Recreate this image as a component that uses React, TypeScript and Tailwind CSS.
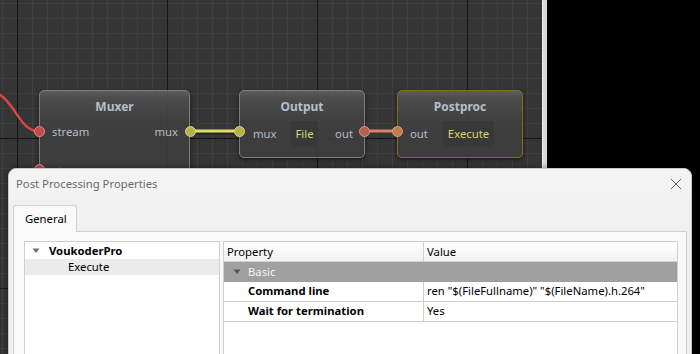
import React from "react";

const ui = { fontFamily: '"Noto Sans", "Open Sans", sans-serif' };

function Grid() {
  const minorV: number[] = [];
  for (let x = 2; x < 542; x += 15) minorV.push(x);
  const minorH: number[] = [];
  for (let y = 3; y < 354; y += 15) minorH.push(y);
  return (
    <svg width={542} height={354} className="absolute left-0 top-0">
      <rect x={0} y={0} width={542} height={354} fill="#353535" />
      {minorV.map((x) => (
        <line key={"v" + x} x1={x + 0.5} y1={0} x2={x + 0.5} y2={354} stroke="#3f3f3f" strokeWidth={1} />
      ))}
      {minorH.map((y) => (
        <line key={"h" + y} x1={0} y1={y + 0.5} x2={542} y2={y + 0.5} stroke="#3f3f3f" strokeWidth={1} />
      ))}
      {[17, 167, 317, 467].map((x) => (
        <line key={"V" + x} x1={x + 0.5} y1={0} x2={x + 0.5} y2={354} stroke="#151515" strokeWidth={1} />
      ))}
      {[138, 288].map((y) => (
        <line key={"H" + y} x1={0} y1={y + 0.5} x2={542} y2={y + 0.5} stroke="#151515" strokeWidth={1} />
      ))}
      <path d="M -15 88 C 17 95, 16 131, 39 131" fill="none" stroke="#d84444" strokeWidth={2.5} />
      <line x1={190} y1={133.5} x2={239} y2={133.5} stroke="#222" strokeWidth={2} />
      <line x1={190} y1={131} x2={239} y2={131} stroke="#e2e060" strokeWidth={3} />
      <line x1={364} y1={131} x2={397} y2={131} stroke="#e08068" strokeWidth={3} />
    </svg>
  );
}

function Port({ color, ring, x, y }: { color: string; ring: string; x: number; y: number }) {
  return (
    <div
      className="absolute h-[11px] w-[11px] rounded-full border"
      style={{ left: x - 5.5, top: y - 5.5, background: color, borderColor: ring }}
    />
  );
}

const nodeCls =
  "absolute rounded-[5px] border bg-[linear-gradient(to_bottom,rgba(95,95,95,0.95)_0px,rgba(78,78,78,0.92)_7px,rgba(64,64,64,0.9)_30px,rgba(60,60,60,0.9)_100%)] shadow-[0_2px_4px_rgba(0,0,0,0.5)]";

const label = "text-[11.3px] leading-[16px] text-[#b4bcc6]";
const title = "mt-[7px] text-center text-[12px] font-bold leading-[18px] text-[#b4bfcc]";

export default function App() {
  return (
    <div className="relative h-[354px] w-[700px] overflow-hidden bg-black" style={ui}>
      <Grid />
      {/* canvas border strip */}
      <div className="absolute left-[542px] top-0 h-[354px] w-[5px] border-l border-[#f0f0f0] bg-[#d8d8d8]" />

      {/* Muxer node */}
      <div className={nodeCls + " left-[39px] top-[90px] h-[100px] w-[151px] border-[#7c7c7c]"}>
        <div className={title}>Muxer</div>
        <div className={"mt-[8px] flex items-center justify-between pl-[12px] pr-[11px] " + label}>
          <span>stream</span>
          <span>mux</span>
        </div>
        <div className={"mt-[23px] pl-[12px] " + label}>stream</div>
      </div>
      <Port x={39.5} y={131} color="#c44a4a" ring="#e08a8a" />
      <Port x={39.5} y={169} color="#c44a4a" ring="#e08a8a" />
      <Port x={190} y={131} color="#b5b24e" ring="#d6d48a" />

      {/* Output node */}
      <div className={nodeCls + " left-[239px] top-[90px] h-[68px] w-[126px] border-[#7c7c7c]"}>
        <div className={title}>Output</div>
        <div className={"mt-[5px] flex items-center " + label}>
          <span className="ml-[13px] w-[38px]">mux</span>
          <span className="flex h-[26px] w-[27px] items-center justify-center bg-[#383838] text-[#d6d46c]">File</span>
          <span className="ml-auto mr-[11px]">out</span>
        </div>
      </div>
      <Port x={239.5} y={131} color="#b5b24e" ring="#d6d48a" />
      <Port x={364} y={131} color="#b0604e" ring="#d09a8a" />

      {/* Postproc node */}
      <div className={nodeCls + " left-[397px] top-[90px] h-[68px] w-[126px] border-[#8a6a22]"}>
        <div className={title}>Postproc</div>
        <div className={"mt-[5px] flex items-center " + label}>
          <span className="ml-[12px] w-[33px]">out</span>
          <span className="flex h-[26px] w-[51px] items-center justify-center bg-[#383838] text-[#d6d46c]">Execute</span>
        </div>
      </div>
      <Port x={397.5} y={131} color="#c07e52" ring="#d8a070" />

      {/* Dialog */}
      <div className="absolute left-[8px] top-[168px] h-[200px] w-[684px] rounded-t-[8px] border border-[#c8c8c8] bg-[#f0f0f0] text-[11.3px] shadow-[0_0_6px_rgba(0,0,0,0.4)]">
        <div className="flex h-[30px] items-center justify-between rounded-t-[8px] bg-[#f3f3f3] pl-[7px] pr-[8px]">
          <span className="text-[#6a6a6a]">Post Processing Properties</span>
          <svg width="12" height="12" viewBox="0 0 12 12" className="mr-[1px]">
            <path d="M1 1 L11 11 M11 1 L1 11" stroke="#666" strokeWidth="1" fill="none" />
          </svg>
        </div>
        <div className="relative px-[4px] pt-[6px]">
          <div className="relative z-10 flex h-[27px] w-[64px] items-center rounded-t-[3px] border border-b-0 border-[#d0d0d0] bg-[#f9f9f9] pl-[11px] text-black">
            General
          </div>
          <div className="-mt-[1px] flex h-[140px] w-[674px] gap-[3px] border border-[#d0d0d0] bg-[#f9f9f9] pl-[10px] pt-[9px]">
            {/* Tree */}
            <div className="h-[130px] w-[196px] border border-[#cfcfcf] bg-white pt-[1px] leading-[16px] text-black">
              <div className="flex h-[16px] items-center">
                <svg width="8" height="6" viewBox="0 0 8 6" className="ml-[7px] mr-[9px]">
                  <path d="M0.5 0.5 L7.5 0.5 L4 5 Z" fill="#707070" />
                </svg>
                <span className="font-bold">VoukoderPro</span>
              </div>
              <div className="flex h-[16px] items-center bg-[#ebebeb] pl-[43px]">Execute</div>
            </div>
            {/* Property grid */}
            <div className="h-[130px] w-[455px] border border-[#cfcfcf] bg-white text-black">
              <div className="flex h-[20px] border-b border-[#d0d0d0] bg-[linear-gradient(to_bottom,#ffffff,#f1f1f1)] leading-[19px]">
                <div className="w-[200px] border-r border-[#d0d0d0] pl-[3px]">Property</div>
                <div className="pl-[3px]">Value</div>
              </div>
              <div className="flex h-[20px] items-center bg-[#a0a0a0] text-[#f4f4f4]">
                <svg width="8" height="6" viewBox="0 0 8 6" className="ml-[9px] mr-[7px]">
                  <path d="M0.5 0.5 L7.5 0.5 L4 5 Z" fill="#555" />
                </svg>
                <span>Basic</span>
              </div>
              <div className="flex h-[20px] items-center border-b border-[#d0d0d0]">
                <div className="flex h-full w-[200px] items-center border-r border-[#d0d0d0] pl-[24px] font-bold">Command line</div>
                <div className="pl-[3px]">ren "$(FileFullname)" "$(FileName).h.264"</div>
              </div>
              <div className="flex h-[20px] items-center border-b border-[#d0d0d0]">
                <div className="flex h-full w-[200px] items-center border-r border-[#d0d0d0] pl-[24px] font-bold">Wait for termination</div>
                <div className="pl-[3px]">Yes</div>
              </div>
            </div>
          </div>
        </div>
      </div>
    </div>
  );
}
